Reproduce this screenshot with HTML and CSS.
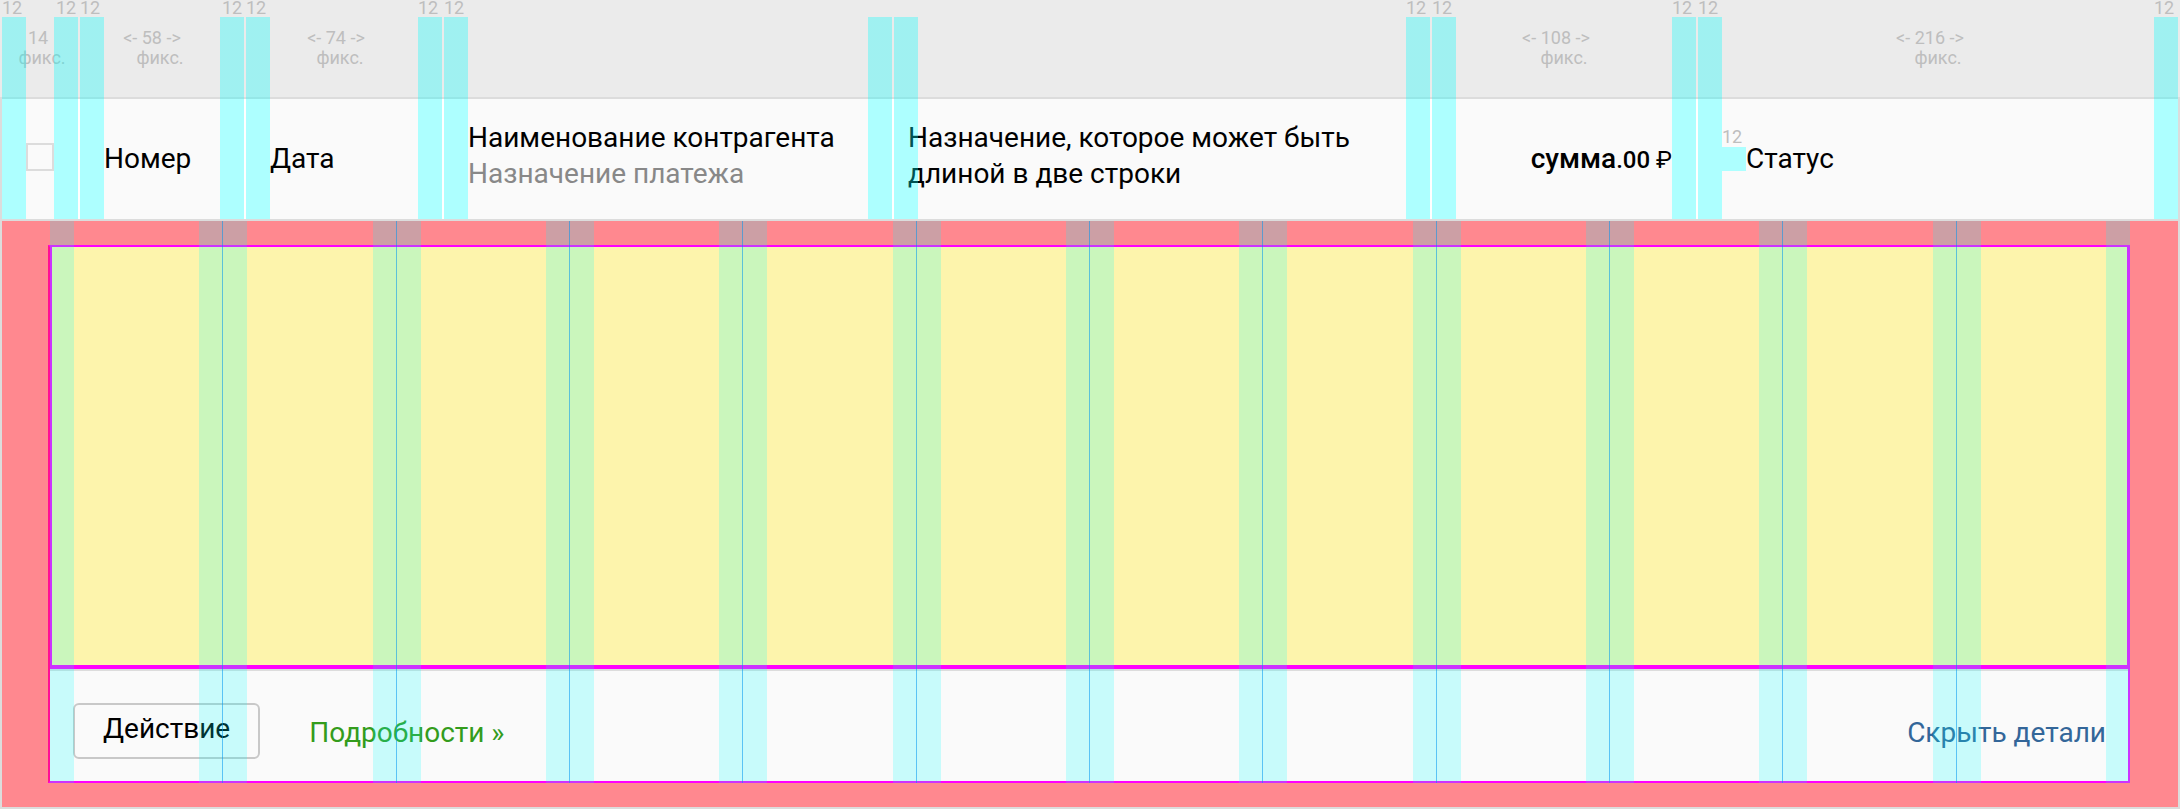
FILE: index.html
```
<!DOCTYPE html>
<html lang="ru">
<head>
<meta charset="utf-8">
<title>Сетка таблицы платежей</title>
<link rel="stylesheet" href="styles.css">
</head>
<body>
<main class="spec">
  <section class="table">
    <div class="cell cell-check">
      <div class="gutters"><span>12</span><span>12</span></div>
      <p class="note">14<br><span class="fixed">фикс.</span></p>
      <div class="content"><input type="checkbox" class="check" aria-label="Выбрать строку"></div>
    </div>
    <div class="cell cell-number">
      <div class="gutters"><span>12</span><span>12</span></div>
      <p class="note">&lt;- 58 -&gt;<br><span class="fixed">фикс.</span></p>
      <div class="content">Номер</div>
    </div>
    <div class="cell cell-date">
      <div class="gutters"><span>12</span><span>12</span></div>
      <p class="note">&lt;- 74 -&gt;<br><span class="fixed">фикс.</span></p>
      <div class="content">Дата</div>
    </div>
    <div class="cell cell-name">
      <div class="gutters"><span>12</span><span></span></div>
      <div class="content"><div>Наименование контрагента<br><span class="muted">Назначение платежа</span></div></div>
    </div>
    <div class="cell cell-purpose">
      <div class="gutters"><span></span><span>12</span></div>
      <div class="content"><div>Назначение, которое может быть<br>длиной в две строки</div></div>
    </div>
    <div class="cell cell-sum">
      <div class="gutters"><span>12</span><span>12</span></div>
      <p class="note">&lt;- 108 -&gt;<br><span class="fixed">фикс.</span></p>
      <div class="content"><div><b class="amount">сумма</b><span class="cents">.00 </span><span class="currency">₽</span></div></div>
    </div>
    <div class="cell cell-status">
      <div class="gutters"><span>12</span><span>12</span></div>
      <p class="note">&lt;- 216 -&gt;<br><span class="fixed">фикс.</span></p>
      <div class="content"><span class="marker"><span class="marker-label">12</span></span>Статус</div>
    </div>
  </section>
  <section class="details">
    <div class="panel">
      <div class="canvas"></div>
      <footer class="actions">
        <button type="button" class="action">Действие</button>
        <a href="#more" class="more">Подробности »</a>
        <a href="#hide" class="hide">Скрыть детали</a>
      </footer>
    </div>
    <div class="columns" aria-hidden="true">
      <i></i><i></i><i></i><i></i><i></i><i></i><i></i><i></i><i></i><i></i><i></i><i></i>
    </div>
  </section>
</main>
</body>
</html>
```
FILE: styles.css
```
* { box-sizing: border-box; }

body {
  margin: 0;
  background: #fafafa;
  color: #000;
  font: 28px/36px Roboto, sans-serif;
}

.spec {
  display: flex;
  flex-direction: column;
  min-height: 100vh;
}

/* Header row with fixed and fluid columns */
.table {
  display: flex;
  gap: 2px;
  height: 221px;
  padding: 0 2px;
  border-bottom: 2px solid #dcdcdc;
  background:
    linear-gradient(#ebebeb 97px, #dcdcdc 97px) 0 0 / 100% 99px no-repeat,
    linear-gradient(90deg, #dcdcdc 2px, #fff 2px calc(100% - 2px), #dcdcdc calc(100% - 2px));
}

.cell {
  position: relative;
  display: flex;
  flex-direction: column;
  min-width: 0;
  padding: 0 24px;
  background: linear-gradient(transparent 99px, #fafafa 99px) content-box;
}

.cell-check { flex: 0 0 76px; }
.cell-number { flex: 0 0 164px; }
.cell-date { flex: 0 0 196px; }
.cell-name { flex: 400 1 48px; }
.cell-purpose { flex: 488 1 48px; }
.cell-sum { flex: 0 0 264px; }
.cell-status { flex: 0 0 480px; }

.gutters {
  position: absolute;
  inset: 0;
  display: flex;
  justify-content: space-between;
  pointer-events: none;
}

.gutters span {
  width: 24px;
  color: #bebebe;
  font-size: 18px;
  line-height: 16px;
  background: linear-gradient(transparent 17px, rgba(0, 255, 255, 0.32) 17px);
}

.cell-check .gutters span:last-child,
.cell-number .gutters span:last-child { padding-left: 2px; }

.note {
  height: 99px;
  margin: 0;
  padding: 28px 16px 0 0;
  color: #bebebe;
  font-size: 18px;
  line-height: 20px;
  text-align: center;
  white-space: nowrap;
}

.fixed { padding-left: 16px; }

.cell-check .note { margin: 0 -24px; padding-right: 4px; }
.cell-check .fixed { padding-left: 8px; }
.cell-number .note { padding-right: 20px; }
.cell-date .fixed { padding-left: 8px; }

.content {
  display: flex;
  flex: 1;
  align-items: center;
  white-space: nowrap;
}

.cell-check .content { padding-bottom: 4px; }

.cell-name .content,
.cell-purpose .content { padding: 99px 0 6px; }

/* Long purpose text starts inside the gutter */
.cell-purpose .content { margin-left: -10px; }

.muted { color: #888; }

.cell-sum .content { justify-content: flex-end; }

.amount { font-weight: 500; }

.cents { font-size: 24px; font-weight: 500; white-space: pre; }

.currency { font-size: 24px; }

.check {
  appearance: none;
  width: 28px;
  height: 28px;
  margin: 0;
  border: 2px solid #dcdcdc;
  background: #fafafa;
}

.marker {
  position: relative;
  width: 24px;
  height: 24px;
  background: #adffff;
}

.marker-label {
  position: absolute;
  bottom: 24px;
  left: 0;
  color: #bebebe;
  font-size: 18px;
  line-height: 20px;
}

/* Expanded details area */
.details {
  position: relative;
  display: flex;
  flex: 1;
  padding: 24px 48px 24px 46px;
  border: 2px solid #dcdcdc;
  border-top: 0;
  background: #ff888f;
}

.panel {
  display: flex;
  flex: 1;
  flex-direction: column;
  border: 2px solid #f0f;
  border-left-color: #ff0f96;
  background: #fafafa;
}

.canvas {
  flex: 1;
  border-bottom: 4px solid #f0f;
  border-left: 2px solid #f0f;
  border-right: 1px solid #f0f;
  background: #fdf4ac;
}

.actions {
  display: flex;
  align-items: center;
  height: 112px;
  padding: 10px 22px 0 23px;
  border-top: 2px solid #dcdcdc;
}

.action {
  height: 56px;
  padding: 0 28px 4px;
  border: 2px solid #c8c8c8;
  border-radius: 6px;
  background: transparent;
  color: #000;
  font: inherit;
}

.more,
.hide { padding-top: 4px; text-decoration: none; }

.more { margin-left: 49px; color: #339c1c; }

.hide { margin-left: auto; color: #336699; }

/* Twelve-column grid drawn over the details */
.columns {
  position: absolute;
  inset: 0 48px 24px;
  display: grid;
  grid-template-columns: repeat(12, 1fr);
  pointer-events: none;
}

.columns i {
  position: relative;
  border: solid rgba(0, 255, 255, 0.2);
  border-width: 0 24px;
}

.columns i:not(:last-child)::after {
  position: absolute;
  top: 0;
  right: -24px;
  bottom: 0;
  width: 1px;
  background: rgba(0, 150, 240, 0.55);
  content: "";
}
```
